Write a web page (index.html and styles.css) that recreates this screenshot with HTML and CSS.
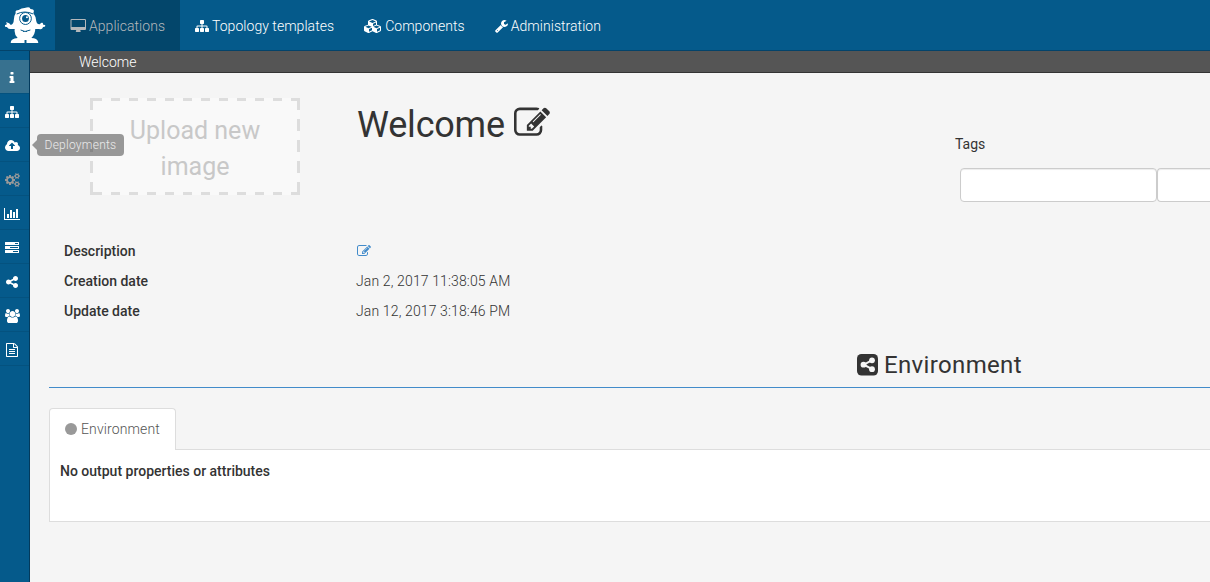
FILE: index.html
```html
<!DOCTYPE html>
<html lang="en">
<head>
<meta charset="utf-8">
<title>Welcome</title>
<link rel="stylesheet" href="styles.css">
</head>
<body>
<svg class="defs" aria-hidden="true">
<symbol id="sitemap" viewBox="0 0 1792 1792"><path d="M1792 1248v320q0 40-28 68t-68 28h-320q-40 0-68-28t-28-68v-320q0-40 28-68t68-28h96v-192h-512v192h96q40 0 68 28t28 68v320q0 40-28 68t-68 28h-320q-40 0-68-28t-28-68v-320q0-40 28-68t68-28h96v-192h-512v192h96q40 0 68 28t28 68v320q0 40-28 68t-68 28h-320q-40 0-68-28t-28-68v-320q0-40 28-68t68-28h96v-192q0-52 38-90t90-38h512v-192h-96q-40 0-68-28t-28-68v-320q0-40 28-68t68-28h320q40 0 68 28t28 68v320q0 40-28 68t-68 28h-96v192h512q52 0 90 38t38 90v192h96q40 0 68 28t28 68z"/></symbol>
<symbol id="edit" viewBox="0 0 1792 1792"><path d="M888 1184l116-116-152-152-116 116v56h96v96h56zm440-720q-16-16-33 1l-350 350q-17 17-1 33t33-1l350-350q17-17 1-33zm80 594v190q0 119-84.500 203.500t-203.500 84.500h-832q-119 0-203.500-84.500t-84.500-203.500v-832q0-119 84.500-203.500t203.500-84.500h832q63 0 117 25 15 7 18 23 3 17-9 29l-49 49q-14 14-32 8-23-6-45-6h-832q-66 0-113 47t-47 113v832q0 66 47 113t113 47h832q66 0 113-47t47-113v-126q0-13 9-22l64-64q15-15 35-7t20 29zm-96-738l288 288-672 672h-288v-288zm444 132l-92 92-288-288 92-92q28-28 68-28t68 28l152 152q28 28 28 68t-28 68z"/></symbol>
<symbol id="share" viewBox="128 0 1536 1792"><path d="M1344 1024q133 0 226.500 93.500t93.500 226.500-93.500 226.500-226.500 93.500-226.500-93.500-93.500-226.500q0-12 2-34l-360-180q-92 86-218 86-133 0-226.500-93.500t-93.500-226.500 93.500-226.500 226.500-93.500q126 0 218 86l360-180q-2-22-2-34 0-133 93.500-226.500t226.500-93.500 226.500 93.500 93.500 226.500-93.500 226.500-226.500 93.500q-126 0-218-86l-360 180q2 22 2 34t-2 34l360 180q92-86 218-86z"/></symbol>
</svg>
<header class="navbar">
  <a class="logo">
    <svg width="41" height="37" viewBox="0 0 42 37" preserveAspectRatio="none">
      <path fill="#fff" d="M11 6Q10 3 14 3Q17 1 20 1Q26-1 26 2Q31 2 29 6Q32 10 32 14Q33 18 36 17Q37 15 39 16Q38 18 41 18Q42 20 39 20Q38 23 35 22L31 22Q31 27 27 31Q33 31 34 35L34 36H22L22 33H20L20 36H6Q5 32 13 31Q9 27 10 22L5 22Q3 22 2 20Q-1 20 0 18Q3 18 1 15Q5 16 6 18Q9 17 9 13Q9 9 11 6Z"/>
      <circle cx="21" cy="11.500" r="6" fill="none" stroke="#055a8b"/>
      <circle cx="21" cy="11.500" r="3.500" fill="#055a8b"/>
      <circle cx="22.500" cy="10.300" r="1" fill="#fff"/>
      <path d="M12 7Q20 3 29 7M16 23Q20 26 26 23M19 24v1M22 24v1" fill="none" stroke="#055a8b"/>
    </svg>
  </a>
  <a class="nav active"><svg width="16" height="14" viewBox="0 0 2048 1792"><path d="M1920 992v-832q0-13-9.500-22.500t-22.500-9.500h-1664q-13 0-22.500 9.500t-9.500 22.500v832q0 13 9.500 22.500t22.500 9.500h1664q13 0 22.500-9.500t9.500-22.500zm128-832v1088q0 66-47 113t-113 47h-576q0 37 16 77.500t32 71 16 43.500q0 26-19 45t-45 19h-512q-26 0-45-19t-19-45q0-14 16-44t32-70 16-78h-576q-66 0-113-47t-47-113v-1088q0-66 47-113t113-47h1664q66 0 113 47t47 113z"/></svg><span>Applications</span></a>
  <a class="nav"><svg width="14" height="14"><use href="#sitemap"/></svg><span>Topology templates</span></a>
  <a class="nav"><svg width="18" height="14" viewBox="0 0 2304 1792"><path d="M640 1632l384-192v-314l-384 164v342zm-64-454l404-173-404-173-404 173zm1088 454l384-192v-314l-384 164v342zm-64-454l404-173-404-173-404 173zm-448-293l384-165v-266l-384 164v267zm-64-379l441-189-441-189-441 189zm1088 518v416q0 36-19 67t-52 47l-448 224q-25 14-57 14t-57-14l-448-224q-4-2-7-4-2 2-7 4l-448 224q-25 14-57 14t-57-14l-448-224q-33-16-52-47t-19-67v-416q0-38 21.500-70t56.500-48l434-186v-400q0-38 21.500-70t56.500-48l448-192q23-10 50-10t50 10l448 192q35 16 56.500 48t21.500 70v400l434 186q36 16 57 48t21 70z"/></svg><span>Components</span></a>
  <a class="nav"><svg width="13" height="14" viewBox="64 0 1664 1792"><path d="M448 1472q0-26-19-45t-45-19-45 19-19 45 19 45 45 19 45-19 19-45zm644-420l-682 682q-37 37-90 37-52 0-91-37l-106-108q-38-36-38-90 0-53 38-91l681-681q39 98 114.500 173.500t173.500 114.500zm634-435q0 39-23 106-47 134-164.500 217.500t-258.500 83.500q-185 0-316.500-131.500t-131.500-316.500 131.500-316.500 316.500-131.500q58 0 121.500 16.500t107.500 46.500q16 11 16 28t-16 28l-293 169v224l193 107q5-3 79-48.500t135.500-81 70.500-35.500q15 0 23.500 10t8.500 25z"/></svg><span>Administration</span></a>
</header>
<div class="layout">
  <nav class="sidebar">
    <a class="side current"><svg width="14" height="14" viewBox="0 0 1792 1792"><path d="M1216 1344v128q0 26-19 45t-45 19h-512q-26 0-45-19t-19-45v-128q0-26 19-45t45-19h64v-384h-64q-26 0-45-19t-19-45v-128q0-26 19-45t45-19h384q26 0 45 19t19 45v576h64q26 0 45 19t19 45zm-128-1152v192q0 26-19 45t-45 19h-256q-26 0-45-19t-19-45v-192q0-26 19-45t45-19h256q26 0 45 19t19 45z"/></svg></a>
    <a class="side"><svg width="14" height="14"><use href="#sitemap"/></svg></a>
    <a class="side"><svg width="15" height="14" viewBox="-64 0 1920 1792"><path d="M1216 864q0-14-9-23l-352-352q-9-9-23-9t-23 9l-351 351q-10 12-10 24 0 14 9 23t23 9h224v352q0 13 9.500 22.500t22.500 9.500h192q13 0 22.500-9.500t9.500-22.500v-352h224q13 0 22.500-9.500t9.500-22.500zm640 288q0 159-112.500 271.500t-271.500 112.500h-1088q-185 0-316.500-131.500t-131.500-316.500q0-130 70-240t188-165q-2-30-2-43 0-212 150-362t362-150q156 0 285.500 87t188.500 231q71-62 166-62 106 0 181 75t75 181q0 76-41 138 130 31 213.500 135.500t83.500 238.500z"/></svg><span class="tip">Deployments</span></a>
    <a class="side disabled"><svg width="15" height="14" viewBox="0 0 1920 1792"><path d="M896 896q0-106-75-181t-181-75-181 75-75 181 75 181 181 75 181-75 75-181zm768 512q0-52-38-90t-90-38-90 38-38 90q0 53 37.500 90.500t90.500 37.500 90.500-37.500 37.500-90.500zm0-1024q0-52-38-90t-90-38-90 38-38 90q0 53 37.500 90.500t90.500 37.500 90.500-37.500 37.500-90.500zm-384 421v185q0 10-7 19.500t-16 10.500l-155 24q-11 35-32 76 34 48 90 115 7 11 7 20 0 12-7 19-23 30-82.500 89.500t-78.500 59.500q-11 0-21-7l-115-90q-37 19-77 31-11 108-23 155-7 24-30 24h-186q-11 0-20-7.500t-10-17.500l-23-153q-34-10-75-31l-118 89q-7 7-20 7-11 0-21-8-144-133-144-160 0-9 7-19 10-14 41-53t47-61q-23-44-35-82l-152-24q-10-1-17-9.500t-7-19.500v-185q0-10 7-19.500t16-10.500l155-24q11-35 32-76-34-48-90-115-7-11-7-20 0-12 7-20 22-30 82-89t79-59q11 0 21 7l115 90q34-18 77-32 11-108 23-154 7-24 30-24h186q11 0 20 7.500t10 17.500l23 153q34 10 75 31l118-89q8-7 20-7 11 0 21 8 144 133 144 160 0 8-7 19-12 16-42 54t-45 60q23 48 34 82l152 23q10 2 17 10.500t7 19.500zm640 533v140q0 16-149 31-12 27-30 52 51 113 51 138 0 4-4 7-122 71-124 71-8 0-46-47t-52-68q-20 2-30 2t-30-2q-14 21-52 68t-46 47q-2 0-124-71-4-3-4-7 0-25 51-138-18-25-30-52-149-15-149-31v-140q0-16 149-31 13-29 30-52-51-113-51-138 0-4 4-7 4-2 35-20t59-34 30-16q8 0 46 46.500t52 67.500q20-2 30-2t30 2q51-71 92-112l6-2q4 0 124 70 4 3 4 7 0 25-51 138 17 23 30 52 149 15 149 31zm0-1024v140q0 16-149 31-12 27-30 52 51 113 51 138 0 4-4 7-122 71-124 71-8 0-46-47t-52-68q-20 2-30 2t-30-2q-14 21-52 68t-46 47q-2 0-124-71-4-3-4-7 0-25 51-138-18-25-30-52-149-15-149-31v-140q0-16 149-31 13-29 30-52-51-113-51-138 0-4 4-7 4-2 35-20t59-34 30-16q8 0 46 46.500t52 67.500q20-2 30-2t30 2q51-71 92-112l6-2q4 0 124 70 4 3 4 7 0 25-51 138 17 23 30 52 149 15 149 31z"/></svg></a>
    <a class="side wide"><svg width="16" height="14" viewBox="0 0 2048 1792"><path d="M640 896v512h-256v-512h256zm384-512v1024h-256v-1024h256zm1024 1152v128h-2048v-1536h128v1408h1920zm-640-896v768h-256v-768h256zm384-384v1152h-256v-1152h256z"/></svg></a>
    <a class="side"><svg width="14" height="14" viewBox="0 0 1792 1792"><path fill-rule="evenodd" d="M45 128h1702q45 0 45 45v294q0 45-45 45h-1702q-45 0-45-45v-294q0-45 45-45zM1280 256v128h384v-128zM45 640h1702q45 0 45 45v294q0 45-45 45h-1702q-45 0-45-45v-294q0-45 45-45zM640 768v128h1024v-128zM45 1152h1702q45 0 45 45v294q0 45-45 45h-1702q-45 0-45-45v-294q0-45 45-45zM1024 1280v128h640v-128z"/></svg></a>
    <a class="side"><svg class="share" width="12" height="14"><use href="#share"/></svg></a>
    <a class="side"><svg width="15" height="14" viewBox="0 0 1920 1792"><path d="M593 896q-162 5-265 128h-134q-82 0-138-40.500t-56-118.500q0-353 124-353 6 0 43.500 21t97.500 42.500 119 21.500q67 0 133-23-5 37-5 66 0 139 81 256zm1071 637q0 120-73 189.500t-194 69.500h-874q-121 0-194-69.500t-73-189.500q0-53 3.500-103.500t14-109 26.500-108.500 43-97.500 62-81 85.500-53.500 111.500-20q10 0 43 21.500t73 48 107 48 135 21.500 135-21.500 107-48 73-48 43-21.500q61 0 111.500 20t85.500 53.500 62 81 43 97.500 26.500 108.500 14 109 3.500 103.500zm-1024-1277q0 106-75 181t-181 75-181-75-75-181 75-181 181-75 181 75 75 181zm704 384q0 159-112.500 271.500t-271.500 112.500-271.500-112.500-112.500-271.500 112.500-271.500 271.500-112.500 271.500 112.500 112.500 271.500zm576 225q0 78-56 118.500t-138 40.500h-134q-103-123-265-128 81-117 81-256 0-29-5-66 66 23 133 23 59 0 119-21.500t97.500-42.500 43.500-21q124 0 124 353zm-128-609q0 106-75 181t-181 75-181-75-75-181 75-181 181-75 181 75 75 181z"/></svg></a>
    <a class="side"><svg width="14" height="14" viewBox="0 0 1792 1792"><path d="M1596 380q28 28 48 76t20 88v1152q0 40-28 68t-68 28h-1344q-40 0-68-28t-28-68v-1600q0-40 28-68t68-28h896q40 0 88 20t76 48zm-444-244v376h376q-10-29-22-41l-313-313q-12-12-41-22zm384 1528v-1024h-416q-40 0-68-28t-28-68v-416h-768v1536h1280zm-1024-864q0-14 9-23t23-9h704q14 0 23 9t9 23v64q0 14-9 23t-23 9h-704q-14 0-23-9t-9-23v-64zm736 224q14 0 23 9t9 23v64q0 14-9 23t-23 9h-704q-14 0-23-9t-9-23v-64q0-14 9-23t23-9h704zm0 256q14 0 23 9t9 23v64q0 14-9 23t-23 9h-704q-14 0-23-9t-9-23v-64q0-14 9-23t23-9h704z"/></svg></a>
  </nav>
  <main class="main">
    <div class="crumb">Welcome</div>
    <section class="top">
      <div class="upload"><svg class="dash" width="210" height="97"><path d="M0 1.500H210M0 95.500H210" stroke-dasharray="12 9 9 9 9 9 9 9 9 9 9 9 9 9 9 9 9 9 9 9 9 9 12"/><path d="M1.500 0V97M208.500 0V97" stroke-dasharray="12 9"/></svg><span>Upload new image</span></div>
      <h1 class="title"><span>Welcome</span><svg width="36" height="36"><use href="#edit"/></svg></h1>
      <div class="tags"><span>Tags</span><div class="fields"><input class="key"><input class="value"></div></div>
    </section>
    <dl class="info">
      <dt>Description</dt><dd><svg class="edit-small" width="14" height="14"><use href="#edit"/></svg></dd>
      <dt>Creation date</dt><dd>Jan 2, 2017 11:38:05 AM</dd>
      <dt>Update date</dt><dd>Jan 12, 2017 3:18:46 PM</dd>
    </dl>
    <h2 class="env"><svg width="21" height="22" viewBox="0 0 21 22"><rect width="21" height="21.500" rx="4.500"/><path d="M15.200 6.200L6.800 10.700L15.200 15.200" fill="none" stroke="#f5f5f5" stroke-width="2"/><g fill="#f5f5f5"><circle cx="15" cy="6.300" r="2.900"/><circle cx="6.500" cy="10.700" r="2.900"/><circle cx="15" cy="15.200" r="2.900"/></g></svg><span>Environment</span></h2>
    <div class="tab"><i class="dot"></i><span>Environment</span></div>
    <div class="panel">No output properties or attributes</div>
  </main>
</div>
</body>
</html>
```
FILE: styles.css
```css
* { box-sizing: border-box; }
html, body { height: 100%; }
body { margin: 0; overflow: hidden; background: #f5f5f5; color: #333; font: 300 14px/20px Roboto, sans-serif; letter-spacing: 0.13px; }
svg { fill: currentColor; flex: none; display: block; }
.defs { position: absolute; width: 0; height: 0; }
.navbar { display: flex; height: 51px; background: #055a8b; border-bottom: 1px solid #03436a; color: #fff; letter-spacing: 0.04px; }
.logo { width: 55px; padding: 7px 0 0 5px; }
.nav { display: flex; align-items: center; gap: 3px; padding: 2px 15px 0; }
.nav svg { color: #fff; }
.active { width: 125px; background: #03466b; color: #b4b8bb; }
.active svg { color: #b4b8bb; }
.layout { display: flex; height: 531px; }
.sidebar { width: 30px; flex: none; padding-top: 9px; background: #055a8b; border-right: 1px solid #033a5c; color: #fff; }
.side { position: relative; display: flex; align-items: center; height: 34px; padding: 2px 0 0 5px; border-bottom: 1px solid #04527f; }
.wide { padding-left: 4px; }
.share { margin-left: 1px; }
.current { background: #37718f; }
.disabled { color: #999; }
.tip { position: absolute; z-index: 2; left: 37px; top: 6px; height: 22px; width: 87px; border-radius: 4px; background: rgba(0, 0, 0, 0.39); color: #ebebeb; font-size: 12px; line-height: 22px; text-align: center; letter-spacing: 0.25px; }
.tip::before { content: ""; position: absolute; left: -5px; top: 6px; border: 5px solid transparent; border-left: 0; border-right-color: rgba(0, 0, 0, 0.39); }
.main { flex: 1; min-width: 0; }
.crumb { height: 22px; padding-left: 49px; background: #555; border-bottom: 1px solid #333; color: #fff; line-height: 22px; letter-spacing: 0; }
.top { display: flex; height: 163px; padding: 25px 0 0 60px; }
.upload { position: relative; flex: none; width: 210px; height: 97px; padding: 15px 30px 0; background: #f9f9f9; color: #c8c8c8; font: 400 25px/36px Roboto, sans-serif; letter-spacing: 0; text-align: center; }
.dash { position: absolute; left: 0; top: 0; fill: none; stroke: #ddd; stroke-width: 3; }
.title { display: flex; flex: none; gap: 9px; width: 597px; margin: 7px 0 0 57px; font: 400 36px/40px Roboto, sans-serif; letter-spacing: -0.2px; }
.tags { flex: 1; padding-top: 36px; margin-left: 1px; font-weight: 400; letter-spacing: 0; }
.fields { display: flex; padding: 14px 0 0 5px; }
.fields input { height: 34px; border: 1px solid #ccc; border-radius: 4px; background: #fff; box-shadow: inset 0 1px 1px rgba(0, 0, 0, 0.075); }
.key { width: 197px; }
.fields .value { flex: 1; min-width: 0; border-right: 0; border-radius: 4px 0 0 4px; }
.info { display: grid; grid-template-columns: 292px 300px; grid-auto-rows: 30px; align-items: center; margin: 0; padding-left: 34px; }
.info dt { font-weight: 500; letter-spacing: 0; }
.info dd { margin: 0; }
.edit-small { margin-left: 1px; color: #428bca; }
.env { display: flex; align-items: center; gap: 6px; height: 46px; margin: 16px 0 0 19px; padding-left: 808px; border-bottom: 1px solid #428bca; font: 400 24px/30px Roboto, sans-serif; letter-spacing: 0.35px; }
.tab { position: relative; display: flex; align-items: center; gap: 4px; width: 127px; height: 42px; margin: 20px 0 -1px 19px; padding: 0 0 2px 15px; border: 1px solid #ddd; border-bottom: 0; border-radius: 4px 4px 0 0; background: #fff; color: #555; }
.dot { width: 12px; height: 12px; border-radius: 50%; background: #999; }
.panel { height: 73px; margin-left: 19px; padding: 11px 10px; border: 1px solid #ddd; border-right: 0; background: #fff; font-weight: 500; letter-spacing: 0; }
```
